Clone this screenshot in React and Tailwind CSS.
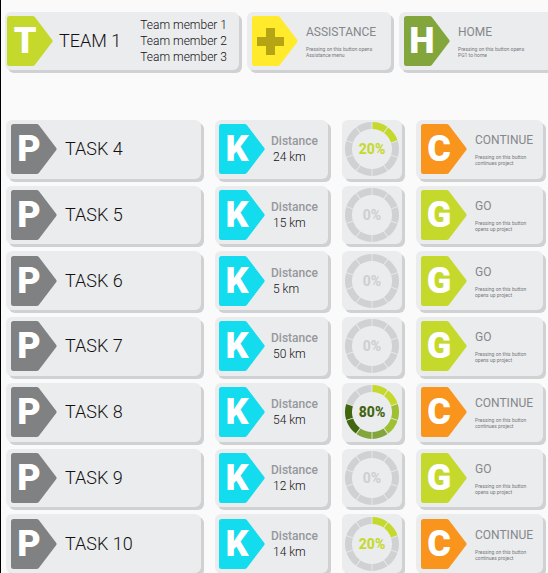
const TASKS = [
  { id: 4, km: 24, done: 20 },
  { id: 5, km: 15, done: 0 },
  { id: 6, km: 5, done: 0 },
  { id: 7, km: 50, done: 0 },
  { id: 8, km: 54, done: 80 },
  { id: 9, km: 12, done: 0 },
  { id: 10, km: 14, done: 20 },
];

const RING_COLORS = ["#c5d92d", "#c5d92d", "#a0c033", "#a0c033", "#82a63c", "#82a63c", "#42660f", "#42660f", "#42660f", "#42660f"];

const CARD = "bg-[#ebecee] shadow-[3px_3px_0_#d0d1d3]";

function Badge({ letter, className }) {
  return (
    <span className="grid h-[50px] w-[46px] shrink-0 grid-cols-1 items-center">
      <svg viewBox="0 0 46 50" aria-hidden="true" className={`col-start-1 row-start-1 h-[50px] w-[46px] ${className}`}>
        <path
          fill="currentColor"
          d="M2.5 0H25.5Q27 0 28 1.2L45.3 24Q46 25 45.3 26L28 48.8Q27 50 25.5 50H2.5Q0 50 0 47.5V2.5Q0 0 2.5 0Z"
        />
        {letter === "+" && <path fill="#b5a514" d="M14 12h9v9h9v9h-9v9h-9v-9H5v-9h9z" />}
      </svg>
      {letter !== "+" && (
        <span className="col-start-1 row-start-1 w-9 text-center text-4xl leading-none font-black text-white">{letter}</span>
      )}
    </span>
  );
}

function Ring({ value }) {
  const point = (r, deg) => {
    const a = ((deg - 90) * Math.PI) / 180;
    return `${(28 + r * Math.cos(a)).toFixed(2)} ${(28 + r * Math.sin(a)).toFixed(2)}`;
  };
  const tone = value === 0 ? "text-[#cfd0d2]" : value > 50 ? "text-[#42660f]" : "text-[#c5d92d]";
  return (
    <div className={`grid place-items-center rounded-md ${CARD}`}>
      <svg viewBox="0 0 56 56" aria-hidden="true" className="col-start-1 row-start-1 size-14">
        {RING_COLORS.map((color, i) => (
          <path
            key={i}
            fill={i * 10 < value ? color : "#d0d1d3"}
            d={`M${point(27, i * 36 + 0.9)}A27 27 0 0 1 ${point(27, i * 36 + 35.1)}L${point(20, i * 36 + 34.8)}A20 20 0 0 0 ${point(20, i * 36 + 1.2)}Z`}
          />
        ))}
      </svg>
      <span className={`col-start-1 row-start-1 text-sm leading-none font-extrabold ${tone}`}>{value}%</span>
    </div>
  );
}

function Action({ letter, color, title, lines, className = "rounded-md" }) {
  return (
    <button type="button" className={`flex min-w-0 items-center gap-2 pl-[5px] text-left ${CARD} ${className}`}>
      <Badge letter={letter} className={color} />
      <span className="flex flex-col gap-1.5 whitespace-nowrap">
        <span className="text-xs leading-4 text-[#85878b]">{title}</span>
        <span className="text-[5px] leading-[6px] text-[#77797c]">
          {lines[0]}
          <br />
          {lines[1]}
        </span>
      </span>
    </button>
  );
}

function TaskRow({ task }) {
  const started = task.done > 0;
  return (
    <li className="grid grid-cols-[minmax(0,1fr)_113px_60px_127px] gap-3.5">
      <div className={`flex items-center gap-2 rounded-md pl-[5px] ${CARD}`}>
        <Badge letter="P" className="text-[#7f8182]" />
        <h2 className="text-lg leading-6 font-light">TASK {task.id}</h2>
      </div>
      <div className={`flex items-center gap-1.5 rounded-md pl-1 ${CARD}`}>
        <Badge letter="K" className="text-[#12dced]" />
        <dl className="text-xs leading-4 whitespace-nowrap">
          <dt className="font-medium text-[#96989b]">Distance</dt>
          <dd className="pl-0.5 font-light">{task.km} km</dd>
        </dl>
      </div>
      <Ring value={task.done} />
      <Action
        letter={started ? "C" : "G"}
        color={started ? "text-[#f9941d]" : "text-[#c5d92d]"}
        title={started ? "CONTINUE" : "GO"}
        lines={["Pressing on this button", started ? "continues project" : "opens up project"]}
      />
    </li>
  );
}

export default function App() {
  return (
    <main className="h-screen overflow-hidden border-l border-black bg-[#fafafa] pt-3 font-[Roboto,sans-serif] text-[#111]">
      <header className="flex h-[58px] gap-2 pl-1">
        <section className={`flex min-w-0 flex-1 items-center gap-1.5 rounded-md pl-0.5 ${CARD}`}>
          <Badge letter="T" className="text-[#c5d92d]" />
          <h1 className="flex-1 text-lg leading-6 font-light whitespace-nowrap">TEAM 1</h1>
          <ul className="pr-3 text-xs leading-4 font-light whitespace-nowrap">
            <li>Team member 1</li>
            <li>Team member 2</li>
            <li>Team member 3</li>
          </ul>
        </section>
        <Action
          letter="+"
          color="text-[#ffea2c]"
          title="ASSISTANCE"
          lines={["Pressing on this button opens", "Assistance menu"]}
          className="w-36 rounded-md"
        />
        <Action
          letter="H"
          color="text-[#82a63c]"
          title="HOME"
          lines={["Pressing on this button opens", "PG1 to home"]}
          className="w-[149px] rounded-l-md"
        />
      </header>
      <ul className="mt-[50px] grid min-h-[453px] auto-rows-fr gap-[7px] pr-[5px] pl-[5px]">
        {TASKS.map((task) => (
          <TaskRow key={task.id} task={task} />
        ))}
      </ul>
    </main>
  );
}
